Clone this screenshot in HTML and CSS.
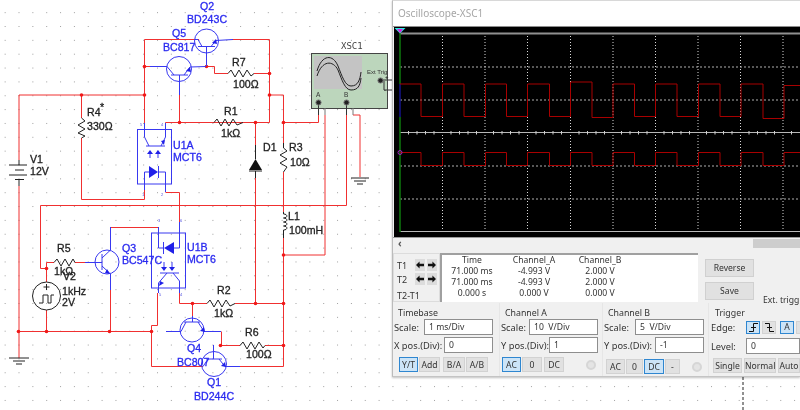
FILE: index.html
```html
<!DOCTYPE html>
<html lang="en">
<head>
<meta charset="utf-8">
<title>Oscilloscope-XSC1</title>
<link rel="stylesheet" href="styles.css">
</head>
<body>
<main class="desktop">
<svg class="schematic" width="800" height="410" viewBox="0 0 800 410" xmlns="http://www.w3.org/2000/svg">
  <defs>
    <pattern id="dots" x="4.65" y="12.15" width="13.85" height="13.85" patternUnits="userSpaceOnUse">
      <rect x="0" y="0" width="1" height="1" class="griddot"/>
    </pattern>
  </defs>
  <rect width="800" height="410" fill="url(#dots)"/>

  <!-- red wires -->
  <g class="wire">
    <path d="M199 39.5H144.5V125"/>
    <path d="M232 39.5H269.5V122.5H165.5V127"/>
    <path d="M144.5 66.5H150"/>
    <path d="M206.5 66.5H214.5V73.5H228M254 73.5H269.5"/>
    <path d="M269.5 95H283.5V143"/>
    <path d="M19 160V95H144.5"/>
    <path d="M81.5 95V118M81.5 138V199.5H144.5V190"/>
    <path d="M283.5 122.5H318.5V115"/>
    <path d="M255.5 122.5V145M255.5 178V303.5"/>
    <path d="M283.5 172V212M283.5 238V366.5H240"/>
    <path d="M283.5 255H325V115"/>
    <path d="M346.5 115V205.5H40.5V268.5H46.5V262.5H54"/>
    <path d="M46.5 268.5V282M46.5 310V331"/>
    <path d="M360 115H353M360 115V177"/>
    <path d="M19 186V358"/>
    <path d="M19 331.5H151.5V366.5H203"/>
    <path d="M151.5 331.5V325.5H157.5V293"/>
    <path d="M110.5 227.5H158.5"/>
    <path d="M110.5 290V331"/>
    <path d="M165.5 192.5H179.5V222"/>
    <path d="M179.5 293V303.5H207M235 303.5H283.5"/>
    <path d="M192.5 303.5V316"/>
    <path d="M221.5 331.5V345.5H240M265 345.5H283.5"/>
    <path d="M179.5 81V122.5"/>
    <path d="M75 262.5H85"/>
  </g>
  <g class="junctions">
    <circle cx="144.5" cy="66.5" r="1.8"/><circle cx="206.5" cy="66.5" r="1.8"/><circle cx="269.5" cy="73.5" r="1.8"/>
    <circle cx="81.5" cy="95" r="1.8"/><circle cx="144.5" cy="95" r="1.8"/><circle cx="269.5" cy="95" r="1.8"/>
    <circle cx="179.5" cy="122.5" r="1.8"/><circle cx="255.5" cy="122.5" r="1.8"/><circle cx="283.5" cy="122.5" r="1.8"/>
    <circle cx="46.5" cy="268.5" r="1.8"/><circle cx="18.5" cy="331.5" r="1.8"/><circle cx="46.5" cy="331.5" r="1.8"/>
    <circle cx="109.5" cy="331.5" r="1.8"/><circle cx="151.5" cy="331.5" r="1.8"/>
    <circle cx="283.5" cy="255" r="1.8"/><circle cx="192.5" cy="303.5" r="1.8"/><circle cx="255.5" cy="303.5" r="1.8"/>
    <circle cx="283.5" cy="303.5" r="1.8"/><circle cx="220.5" cy="345.5" r="1.8"/><circle cx="283.5" cy="345.5" r="1.8"/>
  </g>

  <!-- blue parts -->
  <g class="part">
    <!-- Q2 -->
    <circle cx="206.5" cy="41" r="12"/>
    <path d="M195 39.5H198L202 46.5M198 46.5H215M211 46.5L216 40.5L233 39.5M206.5 46.5V66"/>
    <!-- Q5 -->
    <circle cx="179" cy="69" r="12.5"/>
    <path d="M150 66.5H167L174 75M171 75H188M184 75L190 67L206 66.5M179.5 75V95"/>
    <!-- Q3 -->
    <circle cx="107" cy="262" r="12"/>
    <path d="M85 262.5H102M102 254V270M102 258L110.5 250V227M102 266L110.5 274V290"/>
    <!-- Q4 -->
    <circle cx="192" cy="330" r="12"/>
    <path d="M166 331.5H181L186 322M184 322H200M198 322L204 331.5H221M192.5 316V322"/>
    <!-- Q1 -->
    <circle cx="214" cy="364" r="12.5"/>
    <path d="M203 366.5L208 359M206 359H222M219 359L225 366.5H240M213.5 345V359"/>
    <!-- U1A -->
    <rect x="137.5" y="129.5" width="34" height="54.5"/>
    <path d="M144.5 123V137L149 146M146 146H165M165.5 123V137L161 146"/>
    <path d="M150 158V152M158 158V152"/>
    <path d="M144.5 190V172H149M158 172H165.5V192M158.5 166V178"/>
    <!-- U1B -->
    <rect x="151.5" y="233" width="34" height="55"/>
    <path d="M158.5 227V248H163.5M174 248H179.5V222M163.5 242V254"/>
    <path d="M164 262V268M172 262V268"/>
    <path d="M160 273H179M167 273L158.5 283V293M173 273L179.5 281V293"/>
  </g>
  <g class="partfill">
    <path d="M216 39L217 44L212 43Z"/>
    <path d="M190 67L191 72L186 71Z"/>
    <path d="M110 274L105 273L107 269Z"/>
    <path d="M204 327L205 332L200 331Z"/>
    <path d="M225 362L226 367L221 366Z"/>
    <path d="M161 141L165 140L164 145Z"/>
    <path d="M159 286L160 281L164 283Z"/>
    <path d="M149 166L158 172L149 178Z"/>
    <path d="M174 242L164 248L174 254Z"/>
    <path d="M150 150L153 154H147ZM158 150L161 154H155Z"/>
    <path d="M164 271L167 267H161ZM172 271L175 267H169Z"/>
  </g>
  <g class="pinno">
    <text x="140" y="126">5</text><text x="161" y="126">4</text><text x="142" y="196">1</text><text x="161" y="196">2</text>
    <text x="158" y="222">3</text><text x="180" y="222">6</text><text x="159" y="296">5</text><text x="180" y="296">4</text>
  </g>

  <!-- black parts -->
  <g class="comp">
    <path d="M228 73.5L231 70L235 77L239 70L243 77L247 70L251 76L254 73.5"/>
    <path d="M214 122.5L217 119L221 126L225 119L229 126L233 119L237 125L243 122.5"/>
    <path d="M207 303.5L210 300L214 307L218 300L222 307L226 300L230 306L235 303.5"/>
    <path d="M240 345.5L243 342L247 349L251 342L255 349L259 342L263 348L265 345.5"/>
    <path d="M54 262.5L57 259L61 266L65 259L69 266L73 259L75 262.5"/>
    <path d="M81.5 118L85 121L78 125L85 129L78 133L85 136L81.5 138"/>
    <path d="M283.5 143V148L287 151L280 155L287 159L280 163L287 167L283.5 172"/>
    <path d="M283.5 212V214C288 214 288 218 283.5 218C288 218 288 222 283.5 222C288 222 288 226 283.5 226C288 226 288 230 283.5 230V238" />
    <path d="M19 160V165M9 165H27M15 170H24M9 175H27M15 179.5H24M19 179.5V186"/>
    <path d="M255.5 145V159M249 171H262M255.5 171V178"/>
    <circle cx="46.5" cy="296" r="14"/>
    <path d="M46.5 284V290M43.5 287H49.5"/>
    <path d="M39 303H43V295H48V303H51V295H54"/>
    <path d="M9 358H29M13 361H25M16 364H22"/>
    <path d="M351 178H369M354 181H366M357 184H363"/>
  </g>
  <path class="partfill-black" d="M255.5 159L262 170H249Z"/>

  <!-- XSC1 instrument -->
  <rect class="scope" x="311.5" y="53.5" width="76" height="55"/>
  <rect class="lcd" x="314" y="56" width="48" height="33"/>
  <path class="curve" d="M317 71C322 54 333 54 338 66C342 76 345 86 351 86C358 86 360 80 361 72"/>
  <path class="curve" d="M317 76C322 60 333 60 338 70C342 80 345 90 351 90C358 90 360 86 361 78"/>
  <path class="term-lead" d="M318.5 102V115M346.5 102V115"/>
  <path class="term-lead-gray" d="M325 108V115M353 108V115"/>
  <path class="term-lead" d="M381 80H392M384 81V90H392"/>
  <circle class="term" cx="318.5" cy="102.5" r="2.6"/>
  <circle class="term" cx="346.5" cy="102.5" r="2.6"/>
  <circle class="term" cx="380.5" cy="80.5" r="2.6"/>

  <!-- text -->
  <g class="lbl-blue">
    <text x="200" y="10">Q2</text>
    <text x="187" y="23">BD243C</text>
    <text x="172" y="37">Q5</text>
    <text x="163" y="51">BC817</text>
    <text x="173" y="149">U1A</text>
    <text x="173" y="161">MCT6</text>
    <text x="122" y="252">Q3</text>
    <text x="122" y="264">BC547C</text>
    <text x="187" y="251">U1B</text>
    <text x="187" y="263">MCT6</text>
    <text x="187" y="352">Q4</text>
    <text x="177" y="366">BC807</text>
    <text x="207" y="386">Q1</text>
    <text x="194" y="400">BD244C</text>
  </g>
  <g class="lbl">
    <text x="232" y="66">R7</text>
    <text x="233" y="88">100Ω</text>
    <text x="224" y="115">R1</text>
    <text x="221" y="137">1kΩ</text>
    <text x="87" y="116">R4</text>
    <text x="100" y="111">*</text>
    <text x="87" y="130">330Ω</text>
    <text x="30" y="163">V1</text>
    <text x="30" y="175">12V</text>
    <text x="263" y="151">D1</text>
    <text x="289" y="151">R3</text>
    <text x="290" y="166">10Ω</text>
    <text x="288" y="220">L1</text>
    <text x="289" y="234">100mH</text>
    <text x="57" y="252">R5</text>
    <text x="54" y="275">1kΩ</text>
    <text x="63" y="280">V2</text>
    <text x="62" y="295">1kHz</text>
    <text x="62" y="306">2V</text>
    <text x="217" y="294">R2</text>
    <text x="214" y="317">1kΩ</text>
    <text x="245" y="336">R6</text>
    <text x="246" y="358">100Ω</text>
  </g>
  <text class="xsc" x="341" y="49">XSC1</text>
  <text class="ext" x="367" y="74">Ext Trig</text>
  <text class="pm" x="385" y="79">+</text>
  <text class="pm" x="384" y="92">-</text>
  <text class="ab" x="316" y="97">A</text>
  <text class="ab" x="344" y="97">B</text>
  <path class="page-edge" d="M743 377V410"/>
</svg>

<section class="window">
  <header class="titlebar">Oscilloscope-XSC1</header>

  <div class="screen">
    <svg width="406" height="210" viewBox="394 27 406 210" xmlns="http://www.w3.org/2000/svg">
      <rect x="394" y="27" width="406" height="210" fill="#000"/>
      <g class="grid-v">
        <path d="M442.5 33V232M485 33V232M527.5 33V232M570.5 33V232M613 33V232M655.5 33V232M698 33V232M740.5 33V232M783 33V232"/>
      </g>
      <g class="grid-h">
        <path d="M400 67H800M400 100H800M400 166H800M400 199H800"/>
      </g>
      <path class="axis" d="M400 33.5H800"/>
      <path class="axis-thin" d="M400 132.5H800"/>
      <path class="ticks" d="M408.5 131V134.5M417 131V134.5M425.5 131V134.5M434 131V134.5M451 131V134.5M459.5 131V134.5M468 131V134.5M476.5 131V134.5M493.5 131V134.5M502 131V134.5M510.5 131V134.5M519 131V134.5M536 131V134.5M544.5 131V134.5M553 131V134.5M561.5 131V134.5M579 131V134.5M587.5 131V134.5M596 131V134.5M604.5 131V134.5M621.5 131V134.5M630 131V134.5M638.5 131V134.5M647 131V134.5M664 131V134.5M672.5 131V134.5M681 131V134.5M689.5 131V134.5M706.5 131V134.5M715 131V134.5M723.5 131V134.5M732 131V134.5M749 131V134.5M757.5 131V134.5M766 131V134.5M774.5 131V134.5M791.5 131V134.5"/>
      <path class="axis-thin" d="M400 231.5H800"/>
      <path class="rail" d="M400 33V84M400 117V232"/>
      <path class="rail-b" d="M400 84V117"/>
      <polyline class="trace" points="400,84 421,84 421,116.5 442.5,116.5 442.5,84 464,84 464,116.5 485.5,116.5 485.5,84 506.5,84 506.5,116.5 527.5,116.5 527.5,84 549.5,84 549.5,116.5 570.5,116.5 570.5,82 592,82 592,117.5 613,117.5 613,84 634.5,84 634.5,116.5 655.5,116.5 655.5,84 677,84 677,116.5 698.5,116.5 698.5,84 720,84 720,116.5 741,116.5 741,84 763,84 763,118.5 784,118.5 784,85.5 800,85.5"/>
      <polyline class="trace" points="400,152.5 421,152.5 421,165.5 442.5,165.5 442.5,152.5 464,152.5 464,165.5 485.5,165.5 485.5,152.5 506.5,152.5 506.5,165.5 527.5,165.5 527.5,152.5 549.5,152.5 549.5,165.5 570.5,165.5 570.5,152.5 592,152.5 592,165.5 613,165.5 613,152.5 634.5,152.5 634.5,165.5 655.5,165.5 655.5,152.5 677,152.5 677,165.5 698.5,165.5 698.5,152.5 720,152.5 720,165.5 741,165.5 741,152.5 763,152.5 763,165.5 784,165.5 784,152.5 800,152.5"/>
      <path class="marker-cyan" d="M394.5 28H405.5L400 33.5Z"/>
      <path class="marker-mag" d="M397 29H403L400 33Z"/>
      <circle class="marker-ring" cx="400" cy="152.5" r="2"/>
    </svg>
  </div>

  <div class="hscroll">
    <span class="hscroll-arrow">‹</span>
    <span class="hscroll-thumb"></span>
  </div>

  <div class="cursors">
    <div class="cursor-nav">
      <div class="nav-row">
        <span class="nav-label">T1</span>
        <span class="arrow-btn"><svg width="8" height="8" viewBox="0 0 9 8"><path d="M0 4L4 0V2.5H9V5.5H4V8Z"/></svg></span>
        <span class="arrow-btn"><svg width="8" height="8" viewBox="0 0 9 8"><path d="M9 4L5 0V2.5H0V5.5H5V8Z"/></svg></span>
      </div>
      <div class="nav-row">
        <span class="nav-label">T2</span>
        <span class="arrow-btn"><svg width="8" height="8" viewBox="0 0 9 8"><path d="M0 4L4 0V2.5H9V5.5H4V8Z"/></svg></span>
        <span class="arrow-btn"><svg width="8" height="8" viewBox="0 0 9 8"><path d="M9 4L5 0V2.5H0V5.5H5V8Z"/></svg></span>
      </div>
      <div class="nav-diff">T2-T1</div>
    </div>
    <div class="readout">
      <span>Time</span><span>Channel_A</span><span>Channel_B</span>
      <span>71.000 ms</span><span>-4.993 V</span><span>2.000 V</span>
      <span>71.000 ms</span><span>-4.993 V</span><span>2.000 V</span>
      <span>0.000 s</span><span>0.000 V</span><span>0.000 V</span>
    </div>
    <div class="actions">
      <button class="action-btn">Reverse</button>
      <button class="action-btn">Save</button>
    </div>
    <div class="ext-trigger">Ext. trigger</div>
  </div>

  <div class="controls">
    <div class="group group-time">
      <div class="legend">Timebase</div>
      <div class="row"><span class="row-label">Scale:</span><input class="field field-wide" value="1 ms/Div" readonly></div>
      <div class="row"><span class="row-label">X pos.(Div):</span><input class="field field-short" value="0" readonly></div>
      <div class="btns btns-time">
        <button class="tb tb-19 on">Y/T</button><button class="tb tb-21">Add</button><button class="tb tb-22 tb-gap">B/A</button><button class="tb tb-22">A/B</button>
      </div>
    </div>
    <div class="group group-a">
      <div class="legend">Channel A</div>
      <div class="row"><span class="row-label">Scale:</span><input class="field field-wide" value="10  V/Div" readonly></div>
      <div class="row"><span class="row-label">Y pos.(Div):</span><input class="field field-short" value="1" readonly></div>
      <div class="btns btns-a">
        <button class="tb tb-19 on">AC</button><button class="tb tb-20">0</button><button class="tb tb-20 tb-gap-small">DC</button><span class="radio"></span>
      </div>
    </div>
    <div class="group group-b">
      <div class="legend">Channel B</div>
      <div class="row"><span class="row-label">Scale:</span><input class="field field-wide" value="5  V/Div" readonly></div>
      <div class="row"><span class="row-label">Y pos.(Div):</span><input class="field field-short" value="-1" readonly></div>
      <div class="btns btns-b">
        <button class="tb tb-19">AC</button><button class="tb tb-17">0</button><button class="tb tb-20 on">DC</button><button class="tb tb-15">-</button><span class="radio radio-b"></span>
      </div>
    </div>
    <div class="group group-trig">
      <div class="legend">Trigger</div>
      <div class="row row-left"><span class="row-label trig-label">Edge:</span>
        <button class="edge on"><svg width="9" height="9" viewBox="0 0 9 9"><path d="M0 8.5H4.5V.5H9M2 4.5H7"/></svg></button>
        <button class="edge"><svg width="9" height="9" viewBox="0 0 9 9"><path d="M0 .5H4.5V8.5H9M2 4.5H7"/></svg></button>
        <button class="edge edge-a on">A</button>
        <button class="edge edge-b">B</button>
      </div>
      <div class="row row-left row-level"><span class="row-label trig-label">Level:</span><input class="field field-level" value="0" readonly></div>
      <div class="btns btns-trig">
        <button class="tb tb-29">Single</button><button class="tb tb-32">Normal</button><button class="tb tb-22">Auto</button>
      </div>
    </div>
  </div>
</section>
</main>
</body>
</html>
```

FILE: styles.css
```css
html, body {
  margin: 0;
  padding: 0;
  width: 800px;
  height: 410px;
  overflow: hidden;
  background: #fff;
}

.desktop {
  position: relative;
  width: 800px;
  height: 410px;
  overflow: hidden;
  background: #fff;
  filter: blur(0.3px);
}

/* schematic canvas */
.schematic { position: absolute; left: 0; top: 0; display: block; }
.schematic text { font-family: "Liberation Sans", Arial, sans-serif; }
.griddot { fill: #a0a0a0; }
.wire path { fill: none; stroke: #f03030; stroke-width: 1; }
.junctions circle { fill: #f01818; }
.part circle, .part rect, .part path { fill: none; stroke: #3838f0; stroke-width: 1; }
.partfill path { fill: #2020e8; }
.partfill-black { fill: #111; }
.comp path, .comp circle { fill: none; stroke: #222; stroke-width: 1; }
.lbl-blue text { font-size: 10.6px; font-weight: 400; fill: #2a2af0; stroke: #2a2af0; stroke-width: 0.3px; }
.lbl text { font-size: 10.6px; font-weight: 400; fill: #222; stroke: #222; stroke-width: 0.3px; }
.pinno text { font-size: 4px; fill: #5050e0; }
.scope { fill: #bcd6bc; stroke: #444; stroke-width: 1; }
.lcd { fill: #c4c4c4; }
.curve { fill: none; stroke: #222; stroke-width: 1; }
.term { fill: #222; stroke: #777; stroke-width: 1; }
.term-lead { fill: none; stroke: #333; stroke-width: 1; }
.term-lead-gray { fill: none; stroke: #777; stroke-width: 1; }
.schematic .xsc { font-family: "DejaVu Sans Mono", monospace; font-size: 9px; font-weight: 400; fill: #444; }
.ext { font-size: 6px; fill: #333; }
.pm { font-size: 6px; fill: #222; }
.ab { font-size: 6.5px; fill: #333; }
.page-edge { fill: none; stroke: #222; stroke-width: 1; stroke-dasharray: 3 2; }

/* oscilloscope window */
.window {
  position: absolute;
  left: 392px;
  top: 0;
  width: 408px;
  height: 377px;
  display: flex;
  flex-direction: column;
  box-sizing: border-box;
  border-left: 1px solid #bbb;
  border-top: 1px solid #d8d8d8;
  border-bottom: 1px solid #c4c4c4;
  background: #f0f0f0;
  box-shadow: 0 1px 2px rgba(0, 0, 0, .25);
  font-family: "Noto Sans", "Open Sans", sans-serif;
  font-size: 8.6px;
  color: #333;
  overflow: hidden;
}

.titlebar {
  height: 25px;
  line-height: 25px;
  padding-left: 5px;
  background: #fff;
  color: #a6a6a6;
  font-size: 10px;
  border-bottom: 1px solid #8c8c8c;
}

.screen { height: 210px; padding-left: 1px; background: #f0f0f0; border-bottom: 1px solid #9a9a9a; }
.screen svg { display: block; }
.grid-v path { fill: none; stroke: #d8d8d8; stroke-width: 1; stroke-dasharray: 1 2; }
.grid-h path { fill: none; stroke: #b0b0b0; stroke-width: 1; stroke-dasharray: 2 2; }
.axis { fill: none; stroke: #909090; stroke-width: 2; }
.axis-thin { fill: none; stroke: #b8b8b8; stroke-width: 1; }
.ticks { fill: none; stroke: #d0d0d0; stroke-width: 1; }
.rail { fill: none; stroke: #0e7a0e; stroke-width: 1.5; }
.rail-b { fill: none; stroke: #14148c; stroke-width: 1.5; }
.trace { fill: none; stroke: #a80000; stroke-width: 1; }
.marker-cyan { fill: #30e8e8; }
.marker-mag { fill: #e020e0; }
.marker-ring { fill: none; stroke: #a020c0; stroke-width: 1; }

.hscroll {
  height: 14px;
  display: flex;
  align-items: flex-start;
  justify-content: space-between;
  padding-left: 5px;
  flex: none;
}
.hscroll-arrow { font-size: 10px; line-height: 11px; font-weight: 700; color: #555; }
.hscroll-thumb { width: 47px; height: 9px; margin-top: 1px; background: #cdcdcd; }

.cursors { height: 51px; flex: none; display: flex; position: relative; }
.cursors > * { flex: none; }
.cursor-nav {
  width: 47px;
  margin-top: 1px;
  height: 49px;
  box-sizing: border-box;
  border: 1px solid #dcdcdc;
  display: flex;
  flex-direction: column;
  padding: 5px 0 0 3px;
  gap: 2px;
  font-size: 9px;
}
.nav-row { display: flex; align-items: center; gap: 2px; height: 12px; }
.nav-label { width: 16px; }
.arrow-btn { width: 10px; height: 12px; background: #dcdcdc; display: flex; align-items: center; justify-content: center; }
.arrow-btn svg { display: block; fill: #111; }
.nav-diff { margin-top: 2px; }

.readout {
  width: 258px;
  height: 49px;
  margin-top: 1px;
  box-sizing: border-box;
  border-top: 2px solid #a0a0a0;
  border-left: 2px solid #a0a0a0;
  background: #fff;
  display: grid;
  grid-template-columns: 60px 64px 68px;
  grid-auto-rows: 11px;
  justify-items: center;
  align-items: center;
  line-height: 11px;
}

.actions { width: 49px; margin-left: 7px; padding-top: 7px; display: flex; flex-direction: column; gap: 5px; }
.action-btn {
  height: 18px;
  padding: 0;
  border: 1px solid #d0d0d0;
  background: #e1e1e1;
  font: inherit;
  color: #333;
}
.ext-trigger { white-space: nowrap; margin: 43px 0 0 9px; line-height: 11px; }

.controls {
  display: grid;
  grid-template-columns: 106px 103px 106px 92px;
  flex: 1;
  min-height: 0;
}
.group { display: flex; flex-direction: column; border-left: 1px solid #e6e6e6; padding: 5px 4px 0 1px; overflow: hidden; }
.group-time { border-left: 0; padding: 5px 6px 0 1px; }
.group-trig { padding: 5px 0 0 2px; }
.legend { height: 11px; line-height: 11px; padding-left: 4px; font-size: 8.8px; }
.row { display: flex; align-items: center; justify-content: space-between; height: 16px; margin-bottom: 2px; white-space: nowrap; }
.row-left { justify-content: flex-start; }
.row-label { font-size: 9.3px; }
.field {
  box-sizing: border-box;
  height: 16px;
  padding: 0 0 0 4px;
  border: 1px solid #8e8e8e;
  background: #fff;
  font: inherit;
  color: #333;
  outline: none;
  white-space: pre;
}
.field-wide { width: 69px; }
.field-short { width: 49px; }
.field-level { width: 54px; flex: none; }

.btns { display: flex; align-items: center; gap: 1px; margin-top: 2px; height: 15px; }
.btns-time { padding-left: 5px; }
.btns-a { padding-left: 1px; }
.btns-b { padding-left: 2px; margin-top: 4px; }
.btns-trig { padding-left: 2px; gap: 2px; }
.tb {
  height: 15px;
  padding: 0;
  flex: none;
  box-sizing: border-box;
  border: 1px solid #d2d2d2;
  background: #e1e1e1;
  font: inherit;
  color: #333;
}
.tb.on, .edge.on { background: #cce4f7; border-color: #2e86d0; }
.tb-15 { width: 15px; }
.tb-17 { width: 17px; }
.tb-19 { width: 19px; }
.tb-20 { width: 20px; }
.tb-21 { width: 21px; }
.tb-22 { width: 22px; }
.tb-29 { width: 29px; }
.tb-32 { width: 32px; }
.tb-gap { margin-left: 2px; }
.tb-gap-small { margin-left: 1px; }
.radio {
  width: 10px;
  height: 10px;
  box-sizing: border-box;
  margin-left: 21px;
  border-radius: 50%;
  border: 2px solid #d6d6d6;
  background: #e4e4e4;
  flex: none;
}
.radio-b { margin-left: 11px; }

.trig-label { width: 35px; flex: none; }
.edge {
  flex: none;
  width: 14px;
  height: 13px;
  padding: 0;
  margin-right: 2px;
  box-sizing: border-box;
  border: 1px solid #d2d2d2;
  background: #e1e1e1;
  font: inherit;
  color: #333;
  display: flex;
  align-items: center;
  justify-content: center;
}
.edge svg { display: block; fill: none; stroke: #111; stroke-width: 1; }
.edge-a { margin-left: 2px; }
.edge-b { color: #aaa; }
.row-level { margin-top: 1px; }
```
